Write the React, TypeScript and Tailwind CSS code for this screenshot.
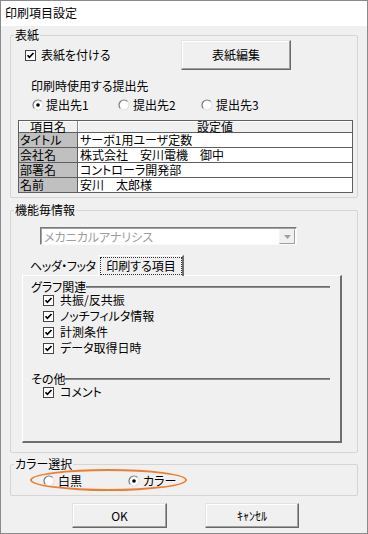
export default function App() {
  return (
    <div className="w-[368px] h-[534px] box-border border border-[#8a8a8a] bg-[#f0f0f0] flex flex-col text-[12px] leading-[14px] text-black font-['Noto_Sans_CJK_JP','Noto_Sans',sans-serif] [font-feature-settings:'palt'] overflow-hidden">
      {/* title bar */}
      <div className="h-[25px] shrink-0 bg-white flex items-center pl-[4px] pb-[2px]">印刷項目設定</div>

      <div className="flex flex-col pl-[9px] pr-[9px]">
        {/* 表紙 */}
        <Group title="表紙" className="mt-[9px] h-[163px]">
          <div className="mt-[4px] h-[30px] flex items-center pl-[14px]">
            <CheckBox />
            <span className="ml-[5px]">表紙を付ける</span>
            <Button className="ml-auto mr-[66px] w-[110px] h-[30px]">表紙編集</Button>
          </div>
          <div className="mt-[9px] pl-[20px] h-[14px]">印刷時使用する提出先</div>
          <div className="mt-[5px] h-[14px] pl-[21px] flex items-center">
            <div className="w-[86px] flex items-center gap-[2px]">
              <Radio on />
              <span>提出先1</span>
            </div>
            <div className="w-[83px] flex items-center gap-[3px]">
              <Radio />
              <span>提出先2</span>
            </div>
            <div className="flex items-center gap-[3px]">
              <Radio />
              <span>提出先3</span>
            </div>
          </div>
          <div className="mt-[8px] ml-[7px] w-[335px] border border-[#5f5f5f] bg-white">
            <div className="flex h-[12px] border-b border-[#5f5f5f] leading-[12px]">
              <div className="w-[59px] bg-[#f0f0f0] border-r border-[#8a8a8a] text-center shadow-[inset_1px_1px_0_#fff]">項目名</div>
              <div className="flex-1 bg-[#f0f0f0] text-center shadow-[inset_1px_1px_0_#fff]">設定値</div>
            </div>
            <Row label="タイトル" value="サーボ1用ユーザ定数" />
            <Row label="会社名" value="株式会社　安川電機　御中" />
            <Row label="部署名" value="コントローラ開発部" />
            <Row label="名前" value="安川　太郎様" last />
          </div>
        </Group>

        {/* 機能毎情報 */}
        <Group title="機能毎情報" className="mt-[12px] h-[243px]">
          <div className="mt-[16px] ml-[29px] w-[257px] h-[18px] flex border border-t-[#7a7a7a] border-l-[#7a7a7a] border-r-[#fafafa] border-b-[#fafafa] bg-white shadow-[inset_1px_1px_0_#a0a0a0]">
            <span className="flex-1 pl-[3px] pt-[1px] text-[#9d9d9d] leading-[15px]">メカニカルアナリシス</span>
            <div className="w-[16px] h-[15px] mt-[1px] mr-[1px] flex items-center justify-center bg-[#f0f0f0] border border-t-[#f4f4f4] border-l-[#f4f4f4] border-r-[#a0a0a0] border-b-[#a0a0a0]">
              <svg width="7" height="4" viewBox="0 0 7 4">
                <path d="M0 0 H7 L3.5 4 Z" fill="#a0a0a0" />
              </svg>
            </div>
          </div>

          {/* tabs */}
          <div className="mt-[10px] ml-[11px] h-[20px] flex items-end">
            <div className="w-[76px] h-[18px] pl-[8px] leading-[18px] whitespace-nowrap tracking-[-0.4px]">ヘッダ・フッタ</div>
            <div className="relative z-10 -mb-[1px] w-[86px] h-[21px] bg-[#f0f0f0] border-t border-l border-white border-r-2 border-r-[#6e6e6e] p-[1px] pr-0">
              <div className="h-full border border-dotted border-[#333] flex items-center justify-center pb-[1px] whitespace-nowrap">印刷する項目</div>
            </div>
          </div>
          <div className="ml-[11px] w-[320px] h-[168px] border-t border-l border-white border-r-2 border-b-2 border-r-[#6e6e6e] border-b-[#6e6e6e] flex flex-col">
            <Heading text="グラフ関連" className="mt-[4px]" />
            <div className="flex flex-col gap-[2px] pl-[20px]">
              <CheckRow text="共振/反共振" />
              <CheckRow text="ノッチフィルタ情報" />
              <CheckRow text="計測条件" />
              <CheckRow text="データ取得日時" />
            </div>
            <Heading text="その他" className="mt-[17px]" />
            <div className="flex flex-col pl-[20px]">
              <CheckRow text="コメント" />
            </div>
          </div>
        </Group>

        {/* カラー選択 */}
        <Group title="カラー選択" className="mt-[11px] h-[32px]">
          <div className="mt-[9px] h-[14px] pl-[32px] flex items-center">
            <div className="w-[85px] flex items-center gap-[3px]">
              <Radio />
              <span>白黒</span>
            </div>
            <div className="flex items-center gap-[3px]">
              <Radio on />
              <span>カラー</span>
            </div>
          </div>
          <div className="absolute left-[19px] top-[4px] w-[157px] h-[22px] rounded-[50%] border-2 border-[#ed7d31]" />
        </Group>

        {/* buttons */}
        <div className="mt-[7px] flex">
          <Button className="ml-[62px] w-[95px] h-[25px]">OK</Button>
          <Button className="ml-[38px] w-[94px] h-[25px]">ｷｬﾝｾﾙ</Button>
        </div>
      </div>
    </div>
  );
}

function Group({ title, className, children }: { title: string; className?: string; children?: React.ReactNode }) {
  return (
    <div className={`relative box-border w-[348px] border border-[#d5d5d5] rounded-[2px] flex flex-col ${className ?? ""}`}>
      <div className="-mt-[8px] -mb-[6px] ml-[3px] px-[1px] w-fit h-[14px] bg-[#f0f0f0]">{title}</div>
      {children}
    </div>
  );
}

function Row({ label, value, last }: { label: string; value: string; last?: boolean }) {
  return (
    <div className={`flex ${last ? "h-[14px]" : "h-[15px] border-b border-[#5f5f5f]"}`}>
      <div className="w-[59px] bg-[#c0c0c0] border-r border-[#5f5f5f] pl-[1px] leading-[14px]">{label}</div>
      <div className="flex-1 pl-[2px] leading-[14px]">{value}</div>
    </div>
  );
}

function Heading({ text, className }: { text: string; className?: string }) {
  return (
    <div className={`h-[13px] pl-[8px] pr-[10px] flex items-center leading-[13px] ${className ?? ""}`}>
      <span>{text}</span>
      <div className="flex-1 h-[2px] border-t border-[#6a6a6a] border-b border-b-[#8c8c8c]" />
    </div>
  );
}

function CheckRow({ text }: { text: string }) {
  return (
    <div className="h-[14px] flex items-center">
      <CheckBox />
      <span className="ml-[6px]">{text}</span>
    </div>
  );
}

function CheckBox() {
  return (
    <svg width="11" height="11" viewBox="0 0 11 11" className="shrink-0">
      <rect x="0.5" y="0.5" width="10" height="10" fill="#fff" stroke="#444" />
      <path d="M2.5 5.2 L4.4 7.3 L8.5 3" fill="none" stroke="#000" strokeWidth="1.7" />
    </svg>
  );
}

function Radio({ on }: { on?: boolean }) {
  return (
    <svg width="12" height="12" viewBox="0 0 12 12" className="shrink-0">
      <circle cx="6" cy="6" r="5" fill="#fff" />
      <path d="M2.46 9.54 A5 5 0 0 1 9.54 2.46" fill="none" stroke="#7a7a7a" strokeWidth="1.2" />
      <path d="M9.54 2.46 A5 5 0 0 1 2.46 9.54" fill="none" stroke="#e2e2e2" strokeWidth="1.2" />
      {on && <circle cx="6" cy="6" r="1.8" fill="#000" />}
    </svg>
  );
}

function Button({ className, children }: { className?: string; children?: React.ReactNode }) {
  return (
    <div
      className={`box-border flex items-center justify-center bg-[#f0f0f0] border border-t-[#e3e3e3] border-l-[#e3e3e3] border-r-[#696969] border-b-[#696969] shadow-[inset_-1px_-1px_0_#a0a0a0,inset_1px_1px_0_#fff] ${className ?? ""}`}
    >
      {children}
    </div>
  );
}
